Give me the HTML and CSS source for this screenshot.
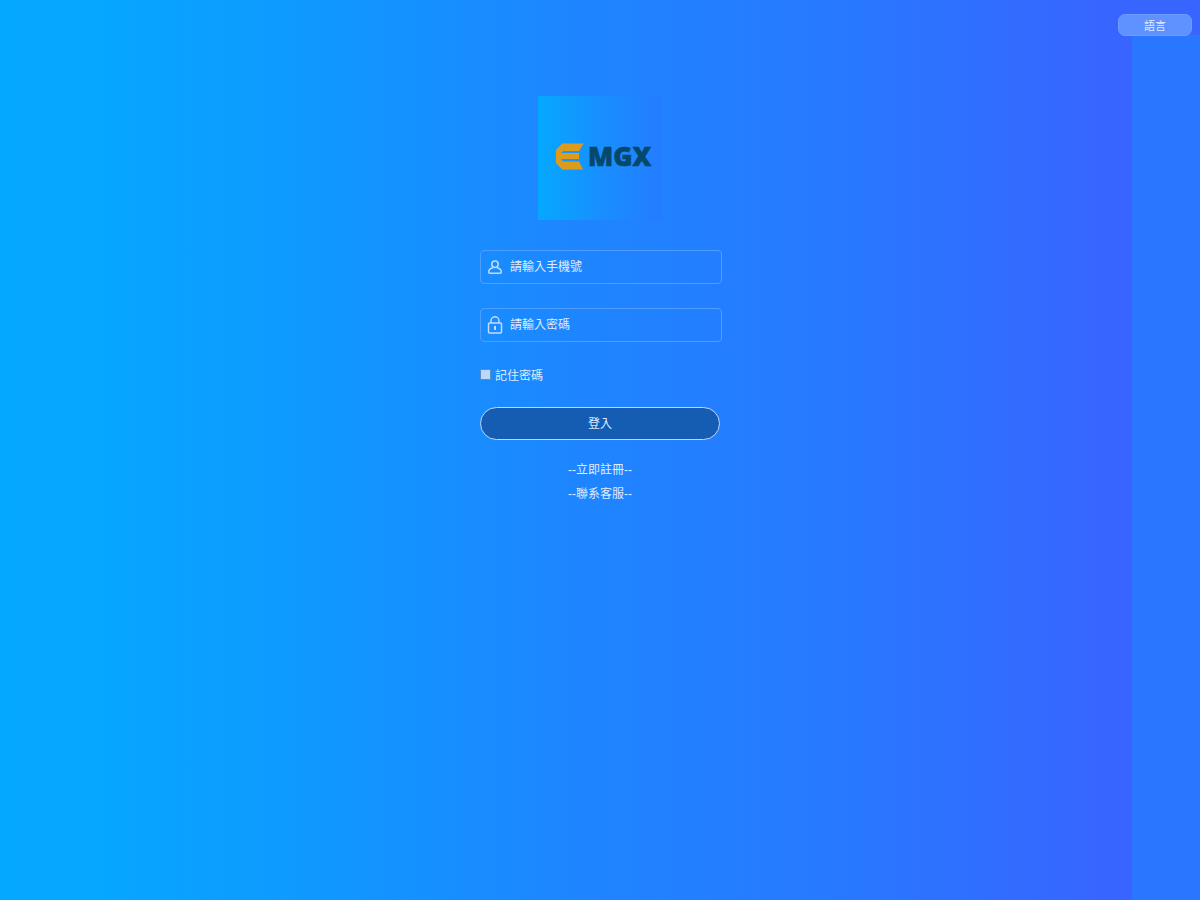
FILE: index.html
```
<!DOCTYPE html>
<html lang="zh-Hant">

<head>
    <meta charset="UTF-8">
    <meta name="viewport" content="width=device-width, initial-scale=1.0">
    <title>MGX - 登入</title>

    <link rel="stylesheet" href="styles.css">
</head>

<body>
    <header>
        <button type="button" class="lang">語言</button>
    </header>

    <main>
        <div class="logo">
            <svg viewBox="0 0 124 124" role="img" aria-label="MGX">
                <path fill="#dd9b1b" d="M24 47.500h21.500L41 55H25l-2 2h18v6H23l2 2.500h16l4 8H24L18 67V54z" />
                <text x="50" y="70">MGX</text>
            </svg>
        </div>

        <form action="/login" method="post">
            <div class="field">
                <svg viewBox="0 0 16 18" aria-hidden="true">
                    <circle cx="8" cy="6.200" r="3.200" />
                    <path d="M6 9.800c-2.500.5-4.300 2-4.300 4.200 0 .9.500 1.300 1.300 1.300h10c.8 0 1.300-.4 1.300-1.300 0-2.200-1.800-3.700-4.300-4.200" />
                </svg>
                <input type="text" name="phone" placeholder="請輸入手機號" aria-label="請輸入手機號">
            </div>

            <div class="field">
                <svg viewBox="0 0 16 18" aria-hidden="true">
                    <rect x="1.500" y="7" width="13" height="10" rx="1" />
                    <path d="M4 7V4.800a4 4 0 0 1 8 0V7" />
                    <path d="M8 10v4" stroke-width="2" />
                </svg>
                <input type="password" name="password" placeholder="請輸入密碼" aria-label="請輸入密碼">
            </div>

            <div class="remember">
                <input type="checkbox" id="remember" name="remember">
                <label for="remember">記住密碼</label>
            </div>

            <button type="submit" class="login">登入</button>
        </form>

        <nav>
            <a href="register.html">--立即註冊--</a>
            <a href="service.html">--聯系客服--</a>
        </nav>
    </main>
</body>

</html>
```

FILE: styles.css
```
* {
    box-sizing: border-box;
}

body {
    margin: 0;
    min-height: 100vh;
    font-family: "Liberation Sans", "Noto Sans CJK TC", sans-serif;
    font-size: 12px;
    color: #dfebff;
    /* flat strip on the right, below the language button */
    background-image: linear-gradient(#2976ff, #2976ff),
        linear-gradient(to right, #05a8ff 0, #05a7ff 8%, #1591ff 35%, #1f84ff 50%, #277aff 68%, #3864ff 94%);
    background-size: 68px calc(100% - 35px), 100% 100%;
    background-position: right bottom, left top;
    background-repeat: no-repeat;
}

button, input {
    font-family: inherit;
    font-size: 12px;
    color: inherit;
}

button {
    cursor: pointer;
}

header {
    display: flex;
    justify-content: flex-end;
    padding: 14px 8px 0;
}

.lang {
    width: 74px;
    height: 22px;
    padding: 0;
    border: 1px solid #6f9cff;
    border-radius: 7px;
    background-color: #5f91ff;
    font-size: 11px;
}

main {
    width: 240px;
    max-width: 100%;
    margin: 60px auto 0;
}

.logo {
    width: 124px;
    height: 124px;
    margin: 0 auto 30px;
    background: linear-gradient(to right, #05a8ff, #188fff 50%, #257cff);
}

.logo svg {
    display: block;
}

.logo text {
    font-family: "Noto Sans", sans-serif;
    font-size: 26px;
    font-weight: 900;
    fill: #05486b;
    stroke: #05486b;
    stroke-width: 0.6;
}

.field {
    display: flex;
    align-items: center;
    width: calc(100% + 2px);
    height: 34px;
    margin-bottom: 24px;
    padding-left: 6px;
    border: 1px solid #4c9fff;
    border-radius: 4px;
}

.field svg {
    width: 16px;
    height: 18px;
    fill: none;
    stroke: #c2dcff;
    stroke-width: 1.5;
}

.field input {
    flex: 1;
    min-width: 0;
    height: 32px;
    margin-left: 7px;
    padding: 0;
    border: none;
    outline: none;
    background: none;
}

.field input::placeholder {
    color: #dfebff;
}

.remember {
    display: flex;
    align-items: center;
    height: 16px;
    margin-bottom: 25px;
}

.remember input {
    appearance: none;
    width: 11px;
    height: 11px;
    margin: 0 4px 0 0;
    border: 1px solid #5c8fc0;
    background-color: #bcd7fb;
}

.remember input:checked {
    background-color: #155db3;
}

.login {
    display: block;
    width: 100%;
    height: 33px;
    padding: 0 0 2px;
    border: 1px solid #bcd7fb;
    border-radius: 17px;
    background-color: #155db3;
}

nav {
    margin-top: 18px;
    text-align: center;
}

nav a {
    display: block;
    line-height: 24px;
    color: #dfebff;
    text-decoration: none;
}
```
